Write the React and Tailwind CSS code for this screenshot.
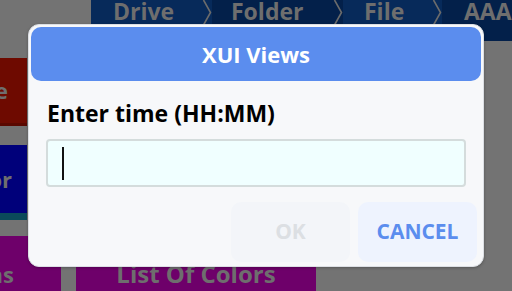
import React from 'react';

const Chevron = () => (
  <svg width="10" height="26" viewBox="0 0 10 26" className="shrink-0">
    <path d="M1.5 0 L8.5 12.5 L1.5 25" fill="none" stroke="#6b6b6b" strokeWidth="1.6" />
  </svg>
);

const crumbs = [
  { label: 'Drive', w: 'w-[111px] pl-[22px]', bg: 'bg-[#072a5a]' },
  { label: 'Folder', w: 'w-[121px] pl-[19px]', bg: 'bg-[#03204a]' },
  { label: 'File', w: 'w-[89px] pl-[21px]', bg: 'bg-[#072a5a]' },
  { label: 'AAA', w: 'w-[70px] pl-[22px]', bg: 'bg-[#03204a]' }
];

const App = () => {
  return (
    <div
      className="relative w-[512px] h-[291px] overflow-hidden bg-[#737373]"
      style={{ fontFamily: '"Open Sans", "Noto Sans", sans-serif' }}
    >
      {/* Breadcrumb bar */}
      <div className="ml-[91px] h-[41px] bg-[#03204a]">
        <div className="flex h-[26px]">
          {crumbs.map((c, i) => (
            <div key={c.label} className={`flex ${c.bg}`}>
              <div className={`${c.w} flex text-[23px] font-bold leading-[22px] text-[#6e6e6e]`}>
                {c.label}
              </div>
              {i < crumbs.length - 1 && <Chevron />}
            </div>
          ))}
        </div>
      </div>

      {/* Left tiles */}
      <div className="flex flex-col">
        <div className="mt-[17px] flex h-[68px] w-[27px] flex-col overflow-hidden bg-[#6e0a00]">
          <div className="flex flex-1 items-center justify-end pr-[19px] text-[22px] font-bold text-[#6e6e6e]">Save</div>
          <div className="h-[3px] bg-[#5a0800]" />
        </div>
        <div className="mt-[19px] flex h-[75px] w-[27px] flex-col overflow-hidden bg-[#00007a]">
          <div className="flex flex-1 items-center justify-end pr-[15px] text-[22px] font-bold text-[#6e6e6e]">Color</div>
          <div className="h-[7px] bg-[#0a4a5a]" />
        </div>
        <div className="mt-[16px] flex gap-[15px]">
          <div className="flex h-[56px] w-[61px] items-end justify-end overflow-hidden bg-[#6e006a] pr-[47px] text-[22px] font-bold leading-[35px] text-[#6e6e6e]">
            Buttons
          </div>
          <div className="flex h-[56px] w-[240px] items-end justify-center bg-[#6e006a] text-[24px] font-bold leading-[37px] text-[#6e6e6e]">
            List Of Colors
          </div>
        </div>
      </div>

      {/* Dialog */}
      <div className="absolute left-[28px] top-[24px] flex h-[243px] w-[456px] flex-col rounded-[11px] border border-[#dcdfe4] bg-[#f7f8fa] p-[2px] shadow-[0_1px_3px_rgba(0,0,0,0.25)]">
        <div className="flex h-[54px] items-center justify-center rounded-[10px] bg-[#5b8dee] text-[22px] font-bold text-white">
          XUI Views
        </div>
        <div className="px-[16px] pt-[19px] text-[23px] font-bold leading-[26px] text-black">
          Enter time (HH:MM)
        </div>
        <div className="mx-[15px] mt-[13px] flex h-[48px] items-center rounded-[4px] border-2 border-[#d4dcdc] bg-[#f0ffff] px-[14px]">
          <div className="h-[33px] w-[2px] bg-[#111]" />
        </div>
        <div className="mt-[15px] flex justify-end gap-[8px] pr-[4px]">
          <div className="flex h-[60px] w-[119px] items-center justify-center rounded-[10px] bg-[#f3f5f9] text-[21px] font-bold text-[#dcdfe3]">
            OK
          </div>
          <div className="flex h-[60px] w-[119px] items-center justify-center rounded-[10px] bg-[#eef3fe] text-[21px] font-bold text-[#5b8dee]">
            CANCEL
          </div>
        </div>
      </div>
    </div>
  );
};

export default App;
